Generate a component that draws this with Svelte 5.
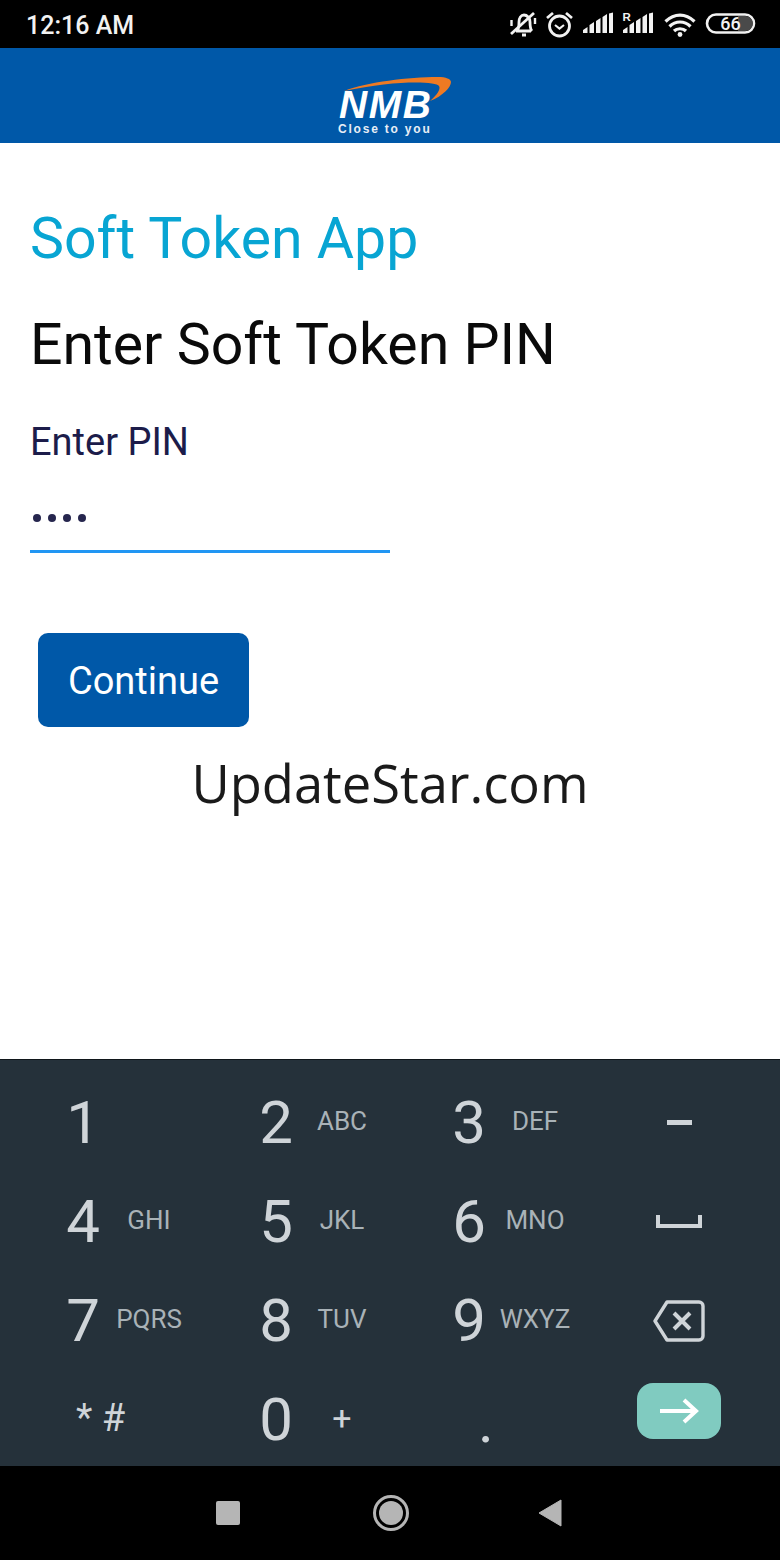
<script>
const rows = [
 [['1',''],['2','ABC'],['3','DEF'],['minus','']],
 [['4','GHI'],['5','JKL'],['6','MNO'],['space','']],
 [['7','PQRS'],['8','TUV'],['9','WXYZ'],['back','']],
 [['*#',''],['0','+'],['.',''],['go','']]
];
</script>

<div class="page">
 <div class="status">
  <span class="time">12:16 AM</span>
  <svg class="stat" width="250" height="48" viewBox="506 0 250 48" fill="none" stroke="#f2f2f2" stroke-width="2.800">
   <path d="M516 31h15M517 31c2-2 2-5 2-9 0-4 2-7 5-7s6 3 6 7c0 4 0 7 2 9" />
   <path d="M511.500 20v6M535 18v6" stroke-width="2.400"/>
   <path d="M522 35h4" stroke-width="3"/>
   <path d="M511 34L534 13" stroke-width="2.800"/>
   <circle cx="559.500" cy="26" r="10"/>
   <path d="M555 25l4.500 3.500 4.500-3.500" stroke-width="2.200"/>
   <path d="M547 18l6-5M572 18l-6-5"/>
   <g fill="#f2f2f2" stroke="none">
    <path d="M583 33v-3l4.500-3V33zM589.500 33v-8l4.500-3V33zM596 33V21l4.500-3V33zM602.500 33V17l4.500-3V33zM609 33V13.500l4-1V33z"/>
    <path d="M623 33v-3l4.500-3V33zM629.500 33v-8l4.500-3V33zM636 33V21l4.500-3V33zM642.500 33V17l4.500-3V33zM649 33V13.500l4-1V33z"/>
   </g>
   <text class="r" x="622.500" y="21">R</text>
   <path d="M665.500 21.500c9-8.500 20-8.500 29 0M669.500 26.500c6-6 15-6 21 0M674 31c3-3 9-3 12 0" stroke-width="3.200"/>
   <circle cx="680" cy="34.500" r="2.400" fill="#f2f2f2" stroke="none"/>
   <rect x="707" y="14.500" width="47" height="18" rx="9" stroke-width="2.600"/>
   <path d="M738 16h7.500a7.500 7.500 0 0 1 0 15H738z" fill="#4a4a4a" stroke="none"/>
   <text class="batt" x="730.500" y="30">66</text>
  </svg>
 </div>

 <div class="brand">
  <div class="logo">
   <svg class="swoosh" width="114" height="30" viewBox="0 0 114 30">
    <path d="M6 14C30 5 70 0 100 0c8 0 13 2 13 5 0 5-8 14-21 19 7-6 11-12 9-15-3-5-45-6-95 5z" fill="#ee7a23"/>
   </svg>
   <span class="nmb">NMB</span>
   <span class="tag">Close to you</span>
  </div>
 </div>

 <main>
  <h1>Soft Token App</h1>
  <h2>Enter Soft Token PIN</h2>
  <div class="label">Enter PIN</div>
  <div class="input"><i></i><i></i><i></i><i></i></div>
  <button>Continue</button>
  <div class="mark">UpdateStar.com</div>
 </main>

 <div class="kbd">
  {#each rows as row}
   <div class="row">
    {#each row as [k, sub]}
     <div class="key">
      {#if k === 'minus'}
       <span class="icon"><svg width="28" height="8" viewBox="0 0 28 8"><rect x="2" y="1" width="25" height="5" fill="#cfd4d8"/></svg></span>
      {:else if k === 'space'}
       <span class="icon"><svg width="46" height="13" viewBox="0 0 46 13" fill="none" stroke="#cfd4d8" stroke-width="4"><path d="M2 0v11h42V0"/></svg></span>
      {:else if k === 'back'}
       <span class="icon"><svg width="52" height="42" viewBox="0 0 52 42" fill="none" stroke="#cfd4d8" stroke-width="3.400" stroke-linejoin="round"><path d="M14 2h32a4 4 0 0 1 4 4v30a4 4 0 0 1-4 4H14L2 21z"/><path d="M21 13l16 16M37 13L21 29" stroke-width="4"/></svg></span>
      {:else if k === 'go'}
       <span class="icon"><span class="go"><svg width="40" height="26" viewBox="0 0 40 26" fill="none" stroke="#fff" stroke-width="4"><path d="M1 13h35M25 2l12 11-12 11"/></svg></span></span>
      {:else if k === '*#'}
       <span class="sym">* #</span>
      {:else if k === '.'}
       <span class="digit dot">.</span>
      {:else}
       <span class="digit">{k}</span>
       <span class="sub" class:plus={sub === '+'}>{sub}</span>
      {/if}
     </div>
    {/each}
   </div>
  {/each}
 </div>

 <div class="nav">
  <span class="sq"></span>
  <span class="home"><span></span></span>
  <svg width="24" height="28" viewBox="0 0 24 28"><path d="M23 1v26L1 14z" fill="#b5b5b5" stroke="#b5b5b5" stroke-linejoin="round" stroke-width="1"/></svg>
 </div>
</div>

<style>
:global(body){margin:0}
.page{width:780px;height:1560px;display:flex;flex-direction:column;font-family:Roboto,sans-serif;background:#fff}
.status{height:48px;flex:none;background:#000;color:#f2f2f2;display:flex;align-items:center;justify-content:space-between;padding:0 24px 0 26px;box-sizing:border-box}
.time{font-size:25px;font-weight:500;line-height:30px;margin-top:3px}
.stat{display:block}
.r{font:700 11.5px "Liberation Sans",sans-serif;fill:#f2f2f2;stroke:none}
.batt{font:500 18px Roboto,sans-serif;fill:#f2f2f2;stroke:none;text-anchor:middle}
.brand{height:95px;flex:none;background:#0058a8;display:flex;justify-content:center}
.logo{position:relative;width:114px;height:95px;color:#fff;margin-left:10px}
.swoosh{position:absolute;left:0;top:29px}
.nmb{position:absolute;left:1px;top:42px;font:italic 700 39px/30px "Liberation Sans",sans-serif;letter-spacing:1.500px}
.tag{position:absolute;left:0;top:75px;font:700 12px/12px "Liberation Sans",sans-serif;letter-spacing:1.800px;white-space:nowrap;color:#e8eef6}
main{flex:1;padding:0 30px;display:flex;flex-direction:column;align-items:flex-start}
h1{font-size:57.2px;line-height:66px;font-weight:400;color:#08a5d3;margin:63px 0 0}
h2{font-size:57.2px;line-height:66px;font-weight:400;color:#0a0a0a;margin:40px 0 0}
.label{font-size:38px;line-height:44px;color:#1c1c4a;margin-top:42px}
.input{width:360px;height:76px;box-sizing:border-box;border-bottom:3px solid #2196f3;display:flex;align-items:center;gap:7px;padding:9px 0 0 3px;margin-top:13px;}
.input i{width:8px;height:8px;border-radius:50%;background:#26264e}
button{background:#0058a8;color:#fff;border:0;border-radius:10px;font:400 38px Roboto,sans-serif;width:211px;height:94px;margin:80px 0 0 8px;padding:2px 0 0}
.mark{align-self:center;font:400 52.5px/66px "Open Sans",sans-serif;color:#1a1a1a;margin-top:23px}
.kbd{height:407px;flex:none;box-sizing:border-box;background:#25313a;border-top:1px solid #10161a;padding:13px 0 0 51px}
.row{display:grid;grid-template-columns:193px 193px 193px 98px;grid-template-rows:99px;height:99px}
.key{display:flex;align-items:center}
.digit{width:64px;text-align:center;font-size:60px;line-height:70px;color:#cfd4d8;flex:none}
.sub{width:72px;margin:-4px 0 0 -2px;text-align:center;font-size:26px;line-height:32px;color:#a9b2b7;flex:none}
.sub.plus{font-size:34px;color:#cfd4d8}
.sym{font-size:38px;line-height:50px;color:#cfd4d8;padding:0 0 0 25px;margin-top:-4px}
.dot{font-size:60px;padding:4px 0 0 17px;box-sizing:content-box}
.icon{width:98px;display:flex;justify-content:center;align-items:center}
.go{width:84px;height:56px;border-radius:16px;background:#80cbc0;display:flex;align-items:center;justify-content:center;margin-top:-18px}
.nav{height:94px;flex:none;background:#000;display:flex;align-items:center;justify-content:space-between;padding:0 218px 0 216px;box-sizing:border-box}
.sq{width:24px;height:24px;background:#b5b5b5;border-radius:2px}
.home{width:36px;height:36px;margin-left:4px;border:3px solid #b5b5b5;border-radius:50%;box-sizing:border-box;display:flex;align-items:center;justify-content:center}
.home span{width:24px;height:24px;border-radius:50%;background:#b5b5b5}
</style>
